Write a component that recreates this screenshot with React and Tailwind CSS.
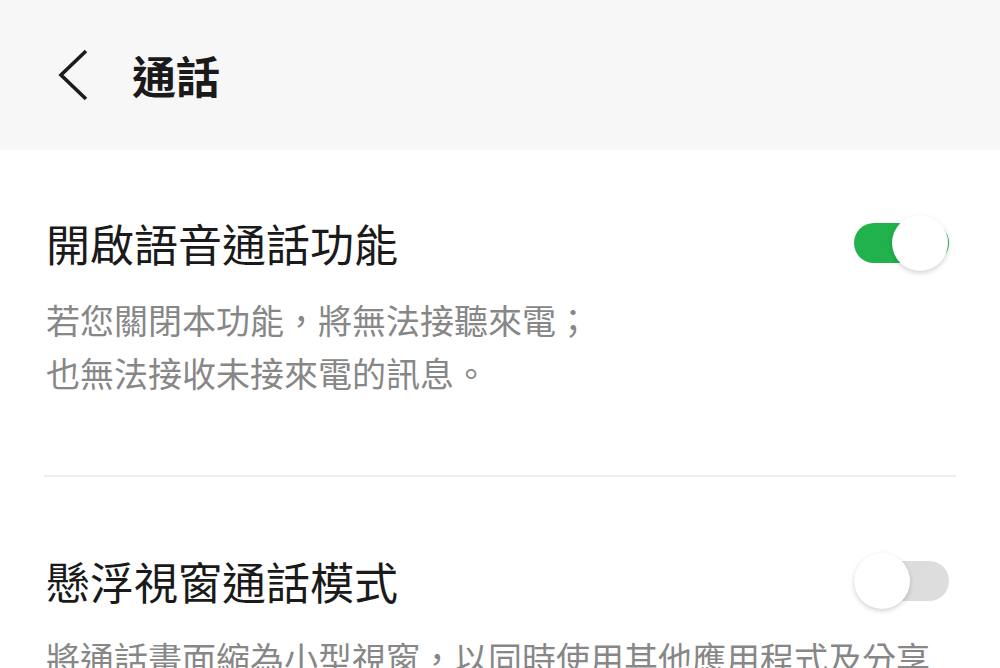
const font = { fontFamily: '"Noto Sans CJK TC", "Noto Sans", sans-serif' };

const Toggle = ({ on }) => (
  <div className="relative w-[96px] h-[56px] shrink-0">
    <div
      className={`absolute left-0 top-[8px] w-[95px] h-[40px] rounded-full ${
        on ? 'bg-[#22b24d]' : 'bg-[#dddddd]'
      }`}
    />
    <div
      className={`absolute top-0 w-[56px] h-[56px] rounded-full bg-white shadow-[0_2px_5px_rgba(0,0,0,0.18)] ${
        on ? 'left-[38px]' : 'left-0'
      }`}
    />
  </div>
);

const SettingRow = ({ title, lines, on }) => (
  <div>
    <div className="flex items-center justify-between">
      <h2 className="text-[44px] leading-[60px] text-[#1a1a1a]">{title}</h2>
      <div className="mr-[6px]">
        <Toggle on={on} />
      </div>
    </div>
    <div className="mt-[20px] text-[34px] leading-[53px] text-[#878787] whitespace-nowrap">
      {lines.map((l) => (
        <p key={l}>{l}</p>
      ))}
    </div>
  </div>
);

export default function App() {
  return (
    <div className="w-[1000px] h-[668px] overflow-hidden bg-white" style={font}>
      <header className="h-[150px] bg-[#f7f7f7] flex items-center pl-[56px]">
        <svg width="34" height="52" viewBox="0 0 34 52" className="mr-[42px]">
          <path d="M30 2 L5 26 L30 50" fill="none" stroke="#1c1c1c" strokeWidth="3.6" strokeLinejoin="miter" />
        </svg>
        <h1 className="text-[44px] font-bold leading-[60px] text-[#1a1a1a]">通話</h1>
      </header>

      <main className="px-[44px]">
        <div className="pt-[63px] pl-[2px]">
          <SettingRow
            title="開啟語音通話功能"
            on
            lines={['若您關閉本功能，將無法接聽來電；', '也無法接收未接來電的訊息。']}
          />
        </div>
        <div className="mt-[76px] h-[2px] bg-[#efefef]" />
        <div className="pt-[74px] pl-[2px]">
          <SettingRow
            title="懸浮視窗通話模式"
            on={false}
            lines={['將通話畫面縮為小型視窗，以同時使用其他應用程式及分享', '畫面。']}
          />
        </div>
      </main>
    </div>
  );
}
